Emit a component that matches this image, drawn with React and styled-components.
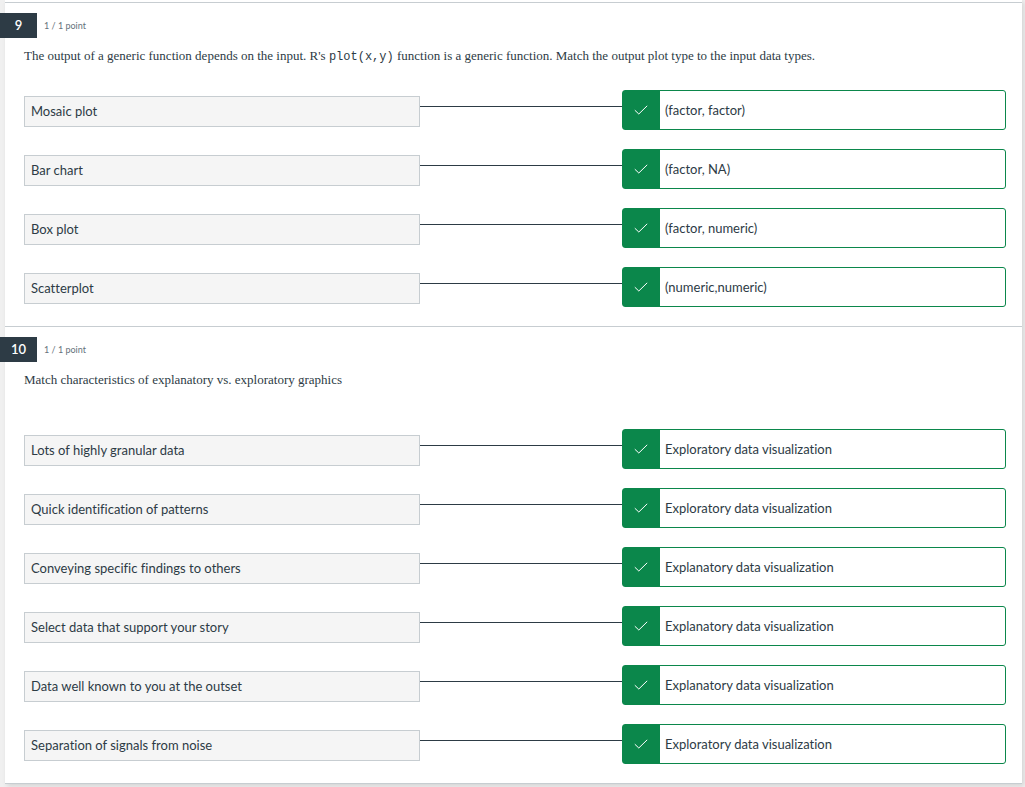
import React from "react";
import styled, { createGlobalStyle } from "styled-components";

const GlobalStyle = createGlobalStyle`
  *, *::before, *::after { box-sizing: border-box; }
  body {
    margin: 0;
    background: #f0f0f0;
    color: #2d3b45;
    font-family: Lato, "Liberation Sans", sans-serif;
    font-size: 13px;
    line-height: 20px;
  }
`;

const Page = styled.main`
  padding: 0 3px 4px 5px;
`;

const Sheet = styled.div`
  background: #fff;
  padding-top: 2px;
  border-bottom: 1px solid #c7cdd1;
  box-shadow: 2px 2px 5px rgba(0, 0, 0, 0.12);
`;

const Question = styled.section`
  border-top: 1px solid #c7cdd1;
  padding: 10px 0 19px;
`;

const Header = styled.header`
  display: flex;
  align-items: center;
  gap: 7px;
  margin-left: -5px;
`;

const Number = styled.h2`
  margin: 0;
  width: 37px;
  height: 25px;
  line-height: 25px;
  background: #2d3b45;
  color: #fff;
  font-size: 13px;
  font-weight: 600;
  text-align: center;
`;

const Points = styled.span`
  color: #66727b;
  font-size: 9px;
`;

const Body = styled.div`
  padding: 8px 16px 0 19px;
`;

const Prompt = styled.p`
  margin: 0;
  min-height: ${(p) => (p.$tall ? "49px" : "34px")};
  font-family: "Liberation Serif", "Times New Roman", serif;
  font-size: 13px;
  line-height: 20px;
`;

const Code = styled.code`
  font-family: "Liberation Mono", "Courier New", monospace;
  font-size: 12px;
`;

const Matches = styled.ul`
  list-style: none;
  margin: 0;
  padding: 10px 0 0;
  display: flex;
  flex-direction: column;
  gap: 19px;
`;

const Row = styled.li`
  display: grid;
  grid-template-columns: 396fr 202fr 384fr;
  align-items: start;
`;

const Term = styled.div`
  margin-top: 6px;
  height: 31px;
  padding: 0 6px;
  line-height: 29px;
  border: 1px solid #c7cdd1;
  background: #f5f5f5;
  font-variant-ligatures: no-common-ligatures;
`;

const Connector = styled.div`
  margin-top: 16px;
  border-top: 1px solid #2d3b45;
`;

const Answer = styled.div`
  display: flex;
  height: 40px;
  border: 1px solid #0b874b;
  border-radius: 3px;
  line-height: 38px;
  font-variant-ligatures: no-common-ligatures;
`;

const Mark = styled.span`
  flex: none;
  width: 37px;
  margin-right: 5px;
  padding: 0 1px 1px 0;
  display: flex;
  align-items: center;
  justify-content: center;
  background: #0b874b;
`;

const Check = () => (
  <svg width="14" height="10" viewBox="0 0 14 10" fill="none" stroke="#fff" role="img" aria-label="Correct">
    <path d="M0.8 5.2L4.8 9L13.2 0.8" />
  </svg>
);

const questions = [
  {
    number: 9,
    prompt: (
      <>
        The output of a generic function depends on the input. R's <Code>plot(x,y)</Code> function is a
        generic function. Match the output plot type to the input data types.
      </>
    ),
    pairs: [
      ["Mosaic plot", "(factor, factor)"],
      ["Bar chart", "(factor, NA)"],
      ["Box plot", "(factor, numeric)"],
      ["Scatterplot", "(numeric,numeric)"],
    ],
  },
  {
    number: 10,
    tall: true,
    prompt: "Match characteristics of explanatory vs. exploratory graphics",
    pairs: [
      ["Lots of highly granular data", "Exploratory data visualization"],
      ["Quick identification of patterns", "Exploratory data visualization"],
      ["Conveying specific findings to others", "Explanatory data visualization"],
      ["Select data that support your story", "Explanatory data visualization"],
      ["Data well known to you at the outset", "Explanatory data visualization"],
      ["Separation of signals from noise", "Exploratory data visualization"],
    ],
  },
];

export default function App() {
  return (
    <>
      <GlobalStyle />
      <Page>
        <Sheet>
          {questions.map((q) => (
            <Question key={q.number}>
              <Header>
                <Number>{q.number}</Number>
                <Points>1 / 1 point</Points>
              </Header>
              <Body>
                <Prompt $tall={q.tall}>{q.prompt}</Prompt>
                <Matches>
                  {q.pairs.map(([term, answer]) => (
                    <Row key={term}>
                      <Term>{term}</Term>
                      <Connector />
                      <Answer>
                        <Mark>
                          <Check />
                        </Mark>
                        <span>{answer}</span>
                      </Answer>
                    </Row>
                  ))}
                </Matches>
              </Body>
            </Question>
          ))}
        </Sheet>
      </Page>
    </>
  );
}
